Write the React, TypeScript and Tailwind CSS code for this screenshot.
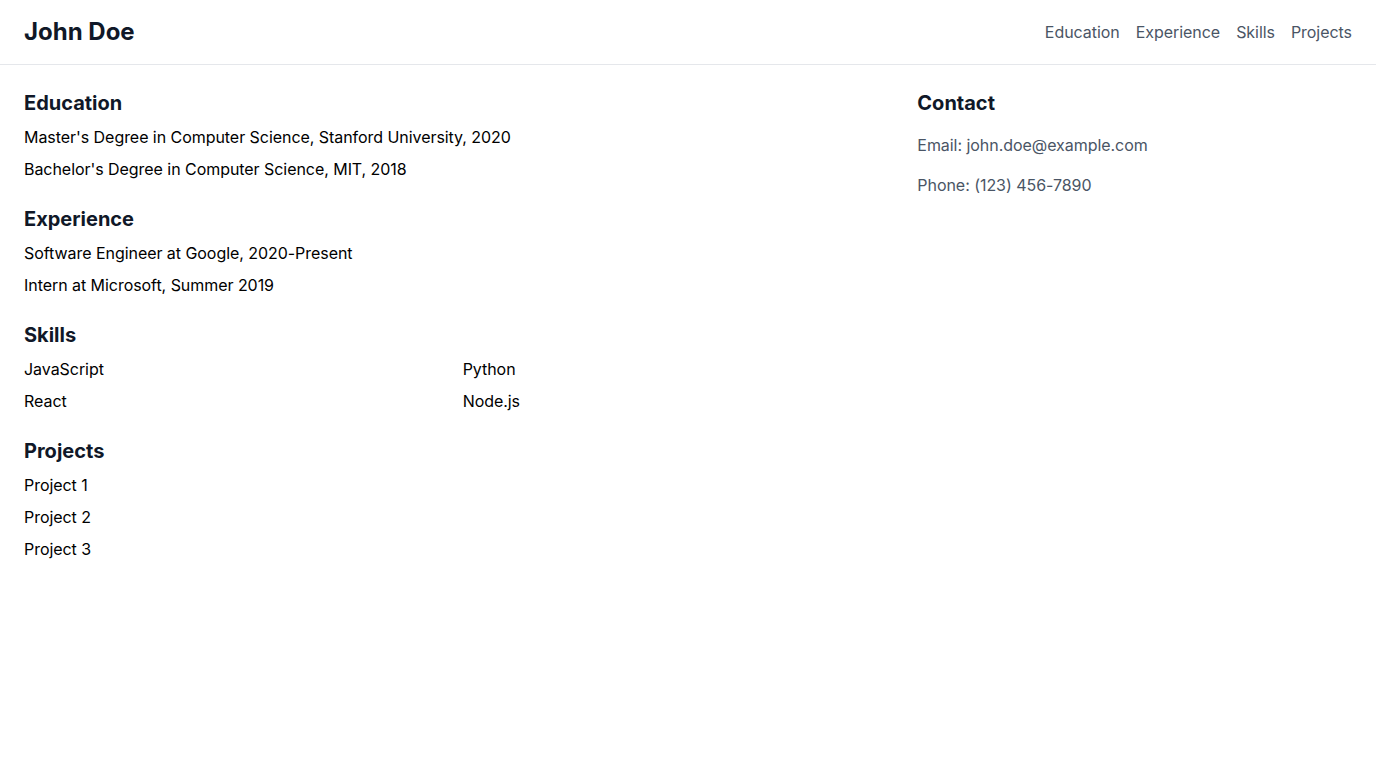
import React from "react";

const Section = ({ title, children }: { title: string; children: React.ReactNode }) => (
  <section className="mb-6">
    <h2 className="text-xl font-bold text-gray-900 mb-2 tracking-normal">{title}</h2>
    {children}
  </section>
);

export default function App() {
  return (
    <div className="min-h-screen bg-white tracking-[-0.05px]" style={{ fontFamily: "Inter, 'Noto Sans', sans-serif" }}>
      <header className="flex items-center justify-between px-6 py-4 border-b border-gray-200">
        <h1 className="text-2xl font-bold text-gray-900 tracking-normal">John Doe</h1>
        <nav className="flex gap-4 text-gray-600">
          <a href="#">Education</a>
          <a href="#">Experience</a>
          <a href="#">Skills</a>
          <a href="#">Projects</a>
        </nav>
      </header>
      <main className="flex p-6">
        <div className="w-2/3 pr-2">
          <Section title="Education">
            <div className="space-y-2">
              <p>Master's Degree in Computer Science, Stanford University, 2020</p>
              <p>Bachelor's Degree in Computer Science, MIT, 2018</p>
            </div>
          </Section>
          <Section title="Experience">
            <div className="space-y-2">
              <p>Software Engineer at Google, 2020-Present</p>
              <p>Intern at Microsoft, Summer 2019</p>
            </div>
          </Section>
          <Section title="Skills">
            <div className="grid grid-cols-2 gap-y-2">
              <p>JavaScript</p>
              <p>Python</p>
              <p>React</p>
              <p>Node.js</p>
            </div>
          </Section>
          <Section title="Projects">
            <div className="space-y-2">
              <p>Project 1</p>
              <p>Project 2</p>
              <p>Project 3</p>
            </div>
          </Section>
        </div>
        <div className="w-1/3 pl-2">
          <h2 className="text-xl font-bold text-gray-900 mb-4 tracking-normal">Contact</h2>
          <div className="space-y-4 text-gray-600">
            <p>Email: john.doe@example.com</p>
            <p>Phone: (123) 456-7890</p>
          </div>
        </div>
      </main>
    </div>
  );
}
